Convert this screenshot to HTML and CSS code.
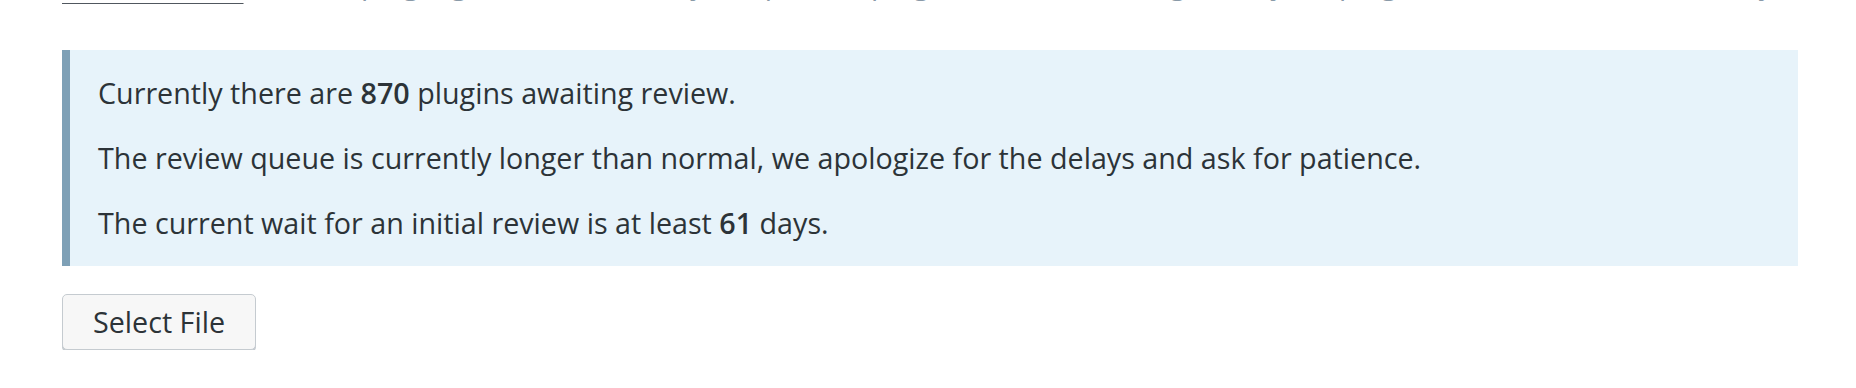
FILE: index.html
```html
<!DOCTYPE html>
<html lang="en">
<head>
<meta charset="utf-8">
<title>Add your plugin</title>
<link rel="stylesheet" href="styles.css">
</head>
<body>
<main class="page">
  <p class="cut-line"><a href="#" class="link">Questions list</a> and the plugin guidelines before you upload a plugin, and acknowledge that your plugin will be reviewed manually.</p>
  <div class="notice">
    <p>Currently there are <strong>870</strong> plugins awaiting review.</p>
    <p>The review queue is currently longer than normal, we apologize for the delays and ask for patience.</p>
    <p>The current wait for an initial review is at least <strong>61</strong> days.</p>
  </div>
  <div class="actions">
    <button type="button" class="btn">Select File</button>
  </div>
</main>
</body>
</html>
```

FILE: styles.css
```css
html, body {
  margin: 0;
  padding: 0;
  background: #ffffff;
}

body {
  font-family: "Open Sans", "Noto Sans", sans-serif;
  font-size: 28.7px;
  color: #2c3338;
  overflow: hidden;
}

.page {
  padding: 0 58px 0 62px;
}

.cut-line {
  margin: -38px 0 0;
  line-height: 42px;
  white-space: nowrap;
  overflow: hidden;
  color: #8a9aa8;
}

.link {
  color: #50575e;
  text-decoration: underline;
  text-decoration-thickness: 2px;
  text-underline-offset: 9px;
}

.notice {
  margin-top: 46px;
  background: #e7f3fa;
  border-left: 8px solid #7ea0b6;
  padding: 22px 28px 22px;
}

.notice p {
  margin: 0 0 23px;
  line-height: 42px;
}

.notice p:last-child {
  margin-bottom: 0;
}

.notice strong {
  font-weight: 600;
}

.actions {
  margin-top: 28px;
  display: flex;
}

.btn {
  font-family: "Open Sans", "Noto Sans", sans-serif;
  font-size: 28.7px;
  line-height: 40px;
  color: #2c3338;
  background: #f7f7f7;
  border: 1px solid #c5cbd0;
  border-radius: 5px;
  box-shadow: 0 2px 0 #c5cbd0;
  padding: 7px 30px;
  cursor: pointer;
}
```
